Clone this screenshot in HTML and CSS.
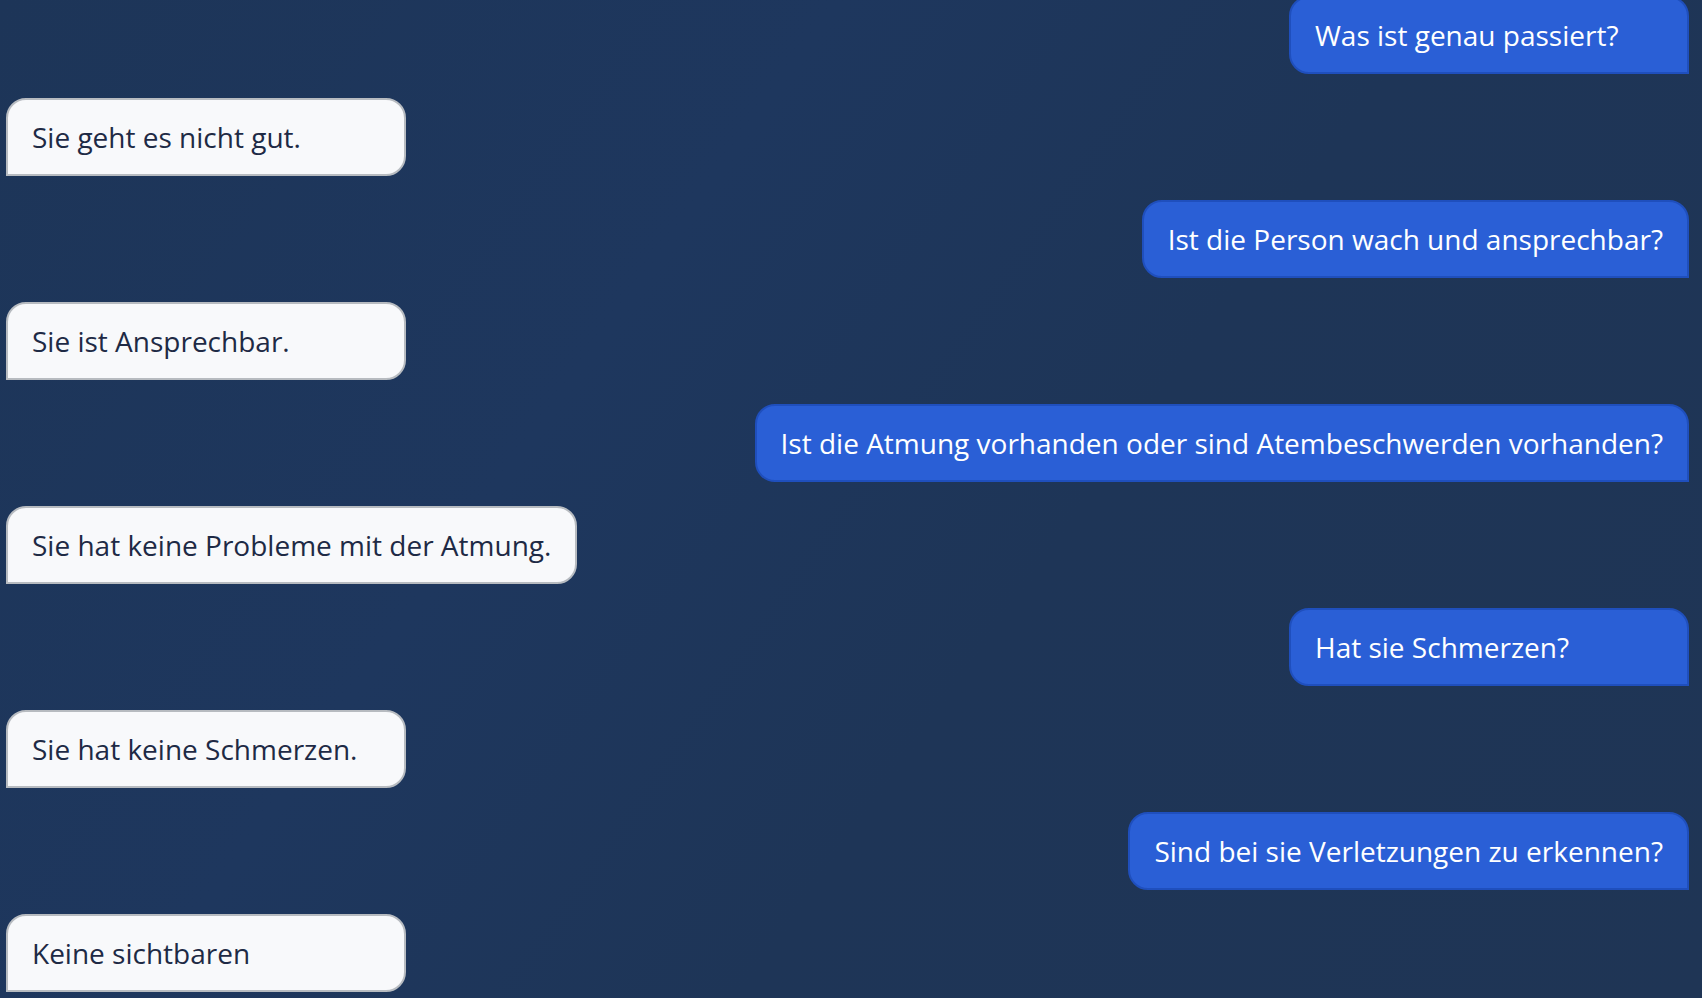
FILE: index.html
```html
<!DOCTYPE html>
<html lang="de">

<head>
    <meta charset="UTF-8">
    <meta name="viewport" content="width=device-width, initial-scale=1.0">
    <title>Chat</title>
    <link rel="stylesheet" href="styles.css">
</head>

<body>
    <div class="chat">
        <div class="chat-list">
            <div class="message question">Was ist genau passiert?</div>
            <div class="message answer">Sie geht es nicht gut.</div>
            <div class="message question">Ist die Person wach und ansprechbar?</div>
            <div class="message answer">Sie ist Ansprechbar.</div>
            <div class="message question">Ist die Atmung vorhanden oder sind Atembeschwerden vorhanden?</div>
            <div class="message answer">Sie hat keine Probleme mit der Atmung.</div>
            <div class="message question">Hat sie Schmerzen?</div>
            <div class="message answer">Sie hat keine Schmerzen.</div>
            <div class="message question">Sind bei sie Verletzungen zu erkennen?</div>
            <div class="message answer">Keine sichtbaren</div>
        </div>
    </div>
</body>

</html>
```

FILE: styles.css
```css
html,
body {
    margin: 0;
    padding: 0;
    height: 100%;
}

body {
    font-family: 'Open Sans', 'Noto Sans', sans-serif;
    background: linear-gradient(125deg, #1d3558 0%, #1e375e 35%, #1e3557 60%, #1f3555 100%);
    color: #1e2a45;
    overflow: hidden;
}

.chat {
    height: 100vh;
    overflow: hidden;
    padding: 0 13px 0 6px;
    box-sizing: border-box;
}

.chat-list {
    display: flex;
    flex-direction: column;
    gap: 24px;
    margin-top: -4px;
}

.message {
    box-sizing: border-box;
    min-width: 400px;
    padding: 16px 24px;
    font-size: 28px;
    line-height: 42px;
    border-radius: 20px;
    white-space: nowrap;
}

/* operator question, right side */
.question {
    align-self: flex-end;
    background-color: #2a5fd6;
    color: #ffffff;
    border: 2px solid #1f4fbd;
    border-bottom-right-radius: 0;
}

/* caller answer, left side */
.answer {
    align-self: flex-start;
    background-color: #f8f9fb;
    color: #1e2a45;
    border: 2px solid #b7bbc0;
    border-bottom-left-radius: 0;
}
```
